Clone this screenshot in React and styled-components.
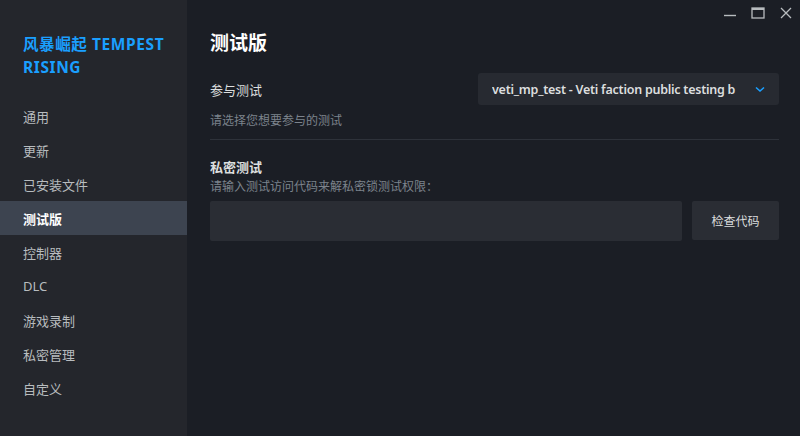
import React from "react";
import styled, { createGlobalStyle } from "styled-components";

const GlobalStyle = createGlobalStyle`
  html, body {
    margin: 0;
    padding: 0;
    background: #1b1e25;
  }
  body {
    font-family: "Noto Sans", "Noto Sans CJK SC", sans-serif;
  }
`;

const Window = styled.div`
  display: flex;
  width: 800px;
  height: 436px;
  overflow: hidden;
  position: relative;
`;

const Sidebar = styled.div`
  width: 187px;
  flex-shrink: 0;
  background-color: #24262c;
  display: flex;
  flex-direction: column;
`;

const GameTitle = styled.div`
  padding: 33px 16px 0 23px;
  color: #1a9fff;
  font-size: 15.5px;
  font-weight: 700;
  line-height: 23px;
  height: 99px;
  box-sizing: border-box;
  letter-spacing: 0.6px;
`;

const NavItem = styled.div`
  height: 34px;
  display: flex;
  align-items: center;
  padding-left: 23px;
  font-size: 13px;
  color: ${({ active }) => (active ? "#ffffff" : "#b8bcbf")};
  font-weight: ${({ active }) => (active ? 700 : 400)};
  background-color: ${({ active }) => (active ? "#3d4450" : "transparent")};
`;

const Main = styled.div`
  flex: 1;
  background-color: #1b1e25;
  padding: 28px 21px 0 23px;
  display: flex;
  flex-direction: column;
`;

const Controls = styled.div`
  position: absolute;
  top: 4px;
  right: 6px;
  display: flex;
  gap: 12px;
  align-items: center;
`;

const ControlBtn = styled.div`
  width: 16px;
  height: 18px;
  display: flex;
  align-items: center;
  justify-content: center;
`;

const PageTitle = styled.h1`
  margin: 0;
  font-size: 19px;
  font-weight: 700;
  color: #ffffff;
  line-height: 30px;
`;

const Row = styled.div`
  display: flex;
  justify-content: space-between;
  align-items: center;
  margin-top: 15px;
`;

const Label = styled.div`
  font-size: 13px;
  color: #dcdedf;
  font-weight: ${({ bold }) => (bold ? 700 : 400)};
`;

const Select = styled.div`
  width: 301px;
  height: 32px;
  box-sizing: border-box;
  background-color: #272a31;
  border-radius: 3px;
  display: flex;
  align-items: center;
  justify-content: space-between;
  padding: 0 14px 0 14px;
`;

const SelectText = styled.span`
  font-size: 12.5px;
  font-weight: 600;
  letter-spacing: -0.25px;
  color: #dcdedf;
  white-space: nowrap;
  overflow: hidden;
  width: 248px;
`;

const Hint = styled.div`
  font-size: 12px;
  color: #7c838c;
  margin-top: ${({ top }) => top}px;
`;

const Divider = styled.div`
  height: 1px;
  background-color: #2e323a;
  margin-top: 10px;
`;

const Section = styled.div`
  margin-top: 17px;
  display: flex;
  flex-direction: column;
`;

const InputRow = styled.div`
  display: flex;
  gap: 10px;
  margin-top: 6px;
`;

const Input = styled.div`
  flex: 1;
  height: 40px;
  background-color: #2a2d34;
  border-radius: 2px;
`;

const Button = styled.div`
  width: 87px;
  height: 39px;
  background-color: #2a2d34;
  border-radius: 2px;
  display: flex;
  align-items: center;
  justify-content: center;
  font-size: 12px;
  color: #dcdedf;
`;

const navItems = ["通用", "更新", "已安装文件", "测试版", "控制器", "DLC", "游戏录制", "私密管理", "自定义"];

export default function App() {
  return (
    <>
      <GlobalStyle />
      <Window>
        <Sidebar>
          <GameTitle>风暴崛起 TEMPEST RISING</GameTitle>
          {navItems.map((item) => (
            <NavItem key={item} active={item === "测试版"}>
              {item}
            </NavItem>
          ))}
        </Sidebar>
        <Main>
          <PageTitle>测试版</PageTitle>
          <Row>
            <Label>参与测试</Label>
            <Select>
              <SelectText>veti_mp_test - Veti faction public testing b</SelectText>
              <svg width="10" height="7" viewBox="0 0 10 7">
                <path d="M1 1.5 L5 5 L9 1.5" stroke="#1a9fff" strokeWidth="1.6" fill="none" />
              </svg>
            </Select>
          </Row>
          <Hint top={6}>请选择您想要参与的测试</Hint>
          <Divider />
          <Section>
            <Label bold>私密测试</Label>
            <Hint top={1}>请输入测试访问代码来解私密锁测试权限：</Hint>
            <InputRow>
              <Input />
              <Button>检查代码</Button>
            </InputRow>
          </Section>
        </Main>
        <Controls>
          <ControlBtn>
            <svg width="14" height="14" viewBox="0 0 14 14">
              <path d="M1 9.5 H13" stroke="#b8bcbf" strokeWidth="1.4" />
            </svg>
          </ControlBtn>
          <ControlBtn>
            <svg width="14" height="14" viewBox="0 0 14 14">
              <rect x="1" y="2" width="12" height="10" stroke="#b8bcbf" strokeWidth="1.3" fill="none" />
              <path d="M1 3 H13" stroke="#b8bcbf" strokeWidth="2" />
            </svg>
          </ControlBtn>
          <ControlBtn>
            <svg width="14" height="14" viewBox="0 0 14 14">
              <path d="M2 2 L12 12 M12 2 L2 12" stroke="#b8bcbf" strokeWidth="1.3" />
            </svg>
          </ControlBtn>
        </Controls>
      </Window>
    </>
  );
}
